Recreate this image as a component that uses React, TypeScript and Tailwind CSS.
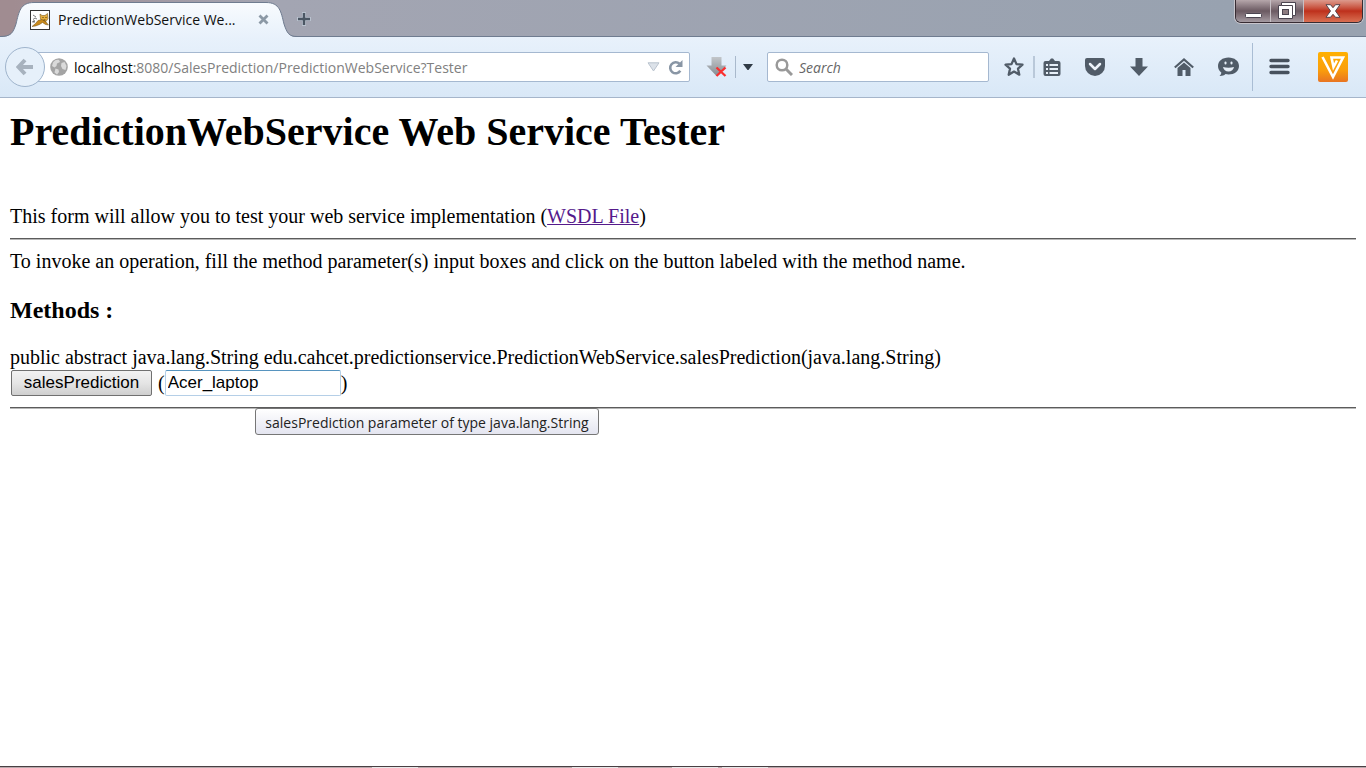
import type { ReactNode } from "react";

function ToolButton({ label, children, className = "" }: { label: string; children: ReactNode; className?: string }) {
  return (
    <button type="button" aria-label={label} className={`flex shrink-0 items-center justify-center ${className}`}>
      {children}
    </button>
  );
}

function CatIcon() {
  return (
    <svg width="20" height="20" viewBox="0 0 20 20" className="shrink-0" aria-hidden="true">
      <rect x="0.5" y="0.5" width="19" height="19" fill="#fff" stroke="#333" />
      <path d="M10 4l2 1.500h3L17.500 3.500l.5 5-2 3h-3.500L10.500 9z" fill="#e8b03c" stroke="#7a5a20" strokeWidth=".6" />
      <path d="M2 16.500l3.500-3 2.500-3 4-1 4 2.500 2.500 3-3-.5-3-2-3 2-4 1.500z" fill="#c98a1c" stroke="#6a4a14" strokeWidth=".5" />
      <path d="M3 5l3 2M3 9.500l2-1.500 2 1M2 12l3-1M4 10v3" fill="none" stroke="#555" strokeWidth=".8" />
      <path d="M12.500 7.500h1M15.500 7.500h1M13.500 10h2" stroke="#3b2b10" strokeWidth=".9" />
    </svg>
  );
}

function TabStrip() {
  return (
    <header className="flex h-[37px] items-start justify-between border-b border-[#6f7c90] bg-linear-to-r from-[#a08c91] from-1% via-[#a3a5b2] via-20% to-[#98a2b0] to-90%">
      <div className="flex h-[37px] items-start">
        <div className="relative h-full w-[297px]">
          <svg width="297" height="37" viewBox="0 0 297 37" className="absolute inset-0" aria-hidden="true">
            <defs>
              <linearGradient id="tab" x1="0" y1="0" x2="0" y2="1">
                <stop offset="0" stopColor="#f8fbfe" />
                <stop offset="1" stopColor="#e8f1fb" />
              </linearGradient>
            </defs>
            <path d="M0 37C11 37 13 33 16 24C19 12 20 2.500 34 2.500H266C280 2.500 281 12 284 24C287 33 289 37 297 37Z" fill="url(#tab)" />
            <path d="M0 36.500C11 36.500 13 33 16 24C19 12 20 2.500 34 2.500H266C280 2.500 281 12 284 24C287 33 289 36.500 297 36.500" fill="none" stroke="#6f7c90" />
          </svg>
          <div className="relative flex h-full items-center pt-0.5 pl-[30px]">
            <CatIcon />
            <span className="ml-2 w-[194px] font-['Open_Sans',sans-serif] text-sm whitespace-nowrap text-[#111]">PredictionWebService We...</span>
            <button type="button" aria-label="Close tab" className="ml-1.5">
              <svg width="11" height="11" viewBox="0 0 11 11" aria-hidden="true">
                <path d="M1.500 1.500l8 8M9.500 1.500l-8 8" stroke="#8c99a6" strokeWidth="2.800" />
              </svg>
            </button>
          </div>
        </div>
        <button type="button" aria-label="New tab" className="mt-3">
          <svg width="14" height="14" viewBox="0 0 14 14" aria-hidden="true">
            <path d="M7 0v14M0 7h14" stroke="#b9c2ce" strokeWidth="4" />
            <path d="M7 1v12M1 7h12" stroke="#4b5663" strokeWidth="2.400" />
          </svg>
        </button>
      </div>
      <div className="mr-[3px] flex h-[23px] overflow-hidden rounded-b-md border border-t-0 border-[#372c33] shadow-[0_0_0_1px_#c8c5cc]">
        <button type="button" aria-label="Minimize" className="flex w-[35px] justify-center border-r border-[#c7c0c5] bg-linear-to-b from-[#b6a7ab] via-[#6b5a62] via-50% to-[#a59ba2] pt-[13px]">
          <svg width="17" height="5" viewBox="0 0 17 5" aria-hidden="true">
            <rect x=".5" y=".5" width="16" height="4" rx="1" fill="#fff" stroke="#4b4550" />
          </svg>
        </button>
        <button type="button" aria-label="Restore" className="flex w-[33px] justify-center border-r border-[#c7c0c5] bg-linear-to-b from-[#b6a7ab] via-[#6b5a62] via-50% to-[#a59ba2] pt-0.5">
          <svg width="18" height="17" viewBox="0 0 18 17" aria-hidden="true">
            <path d="M3.500 .5h14v13h-3v3H.5v-13h3z" fill="#fff" stroke="#4b4550" />
            <path d="M3.500 3.500h11v10" fill="none" stroke="#4b4550" />
            <rect x="4.500" y="7.500" width="6" height="5" fill="#8d7c80" stroke="#4b4550" />
          </svg>
        </button>
        <button type="button" aria-label="Close window" className="flex w-[58px] justify-center bg-linear-to-b from-[#dc9a8d] via-[#be2f1b] via-50% to-[#d96e51] pt-1">
          <svg width="16" height="14" viewBox="0 0 16 14" aria-hidden="true">
            <path d="M1 .7h4.500L8 3.700 10.500.7H15L10.500 7l4.500 6.300h-4.500L8 10.300l-2.500 3H1L5.500 7z" fill="#fff" stroke="#53434a" strokeWidth="1" />
          </svg>
        </button>
      </div>
    </header>
  );
}

function AddressBar() {
  return (
    <div className="flex w-[685px] shrink-0 items-center">
      <button type="button" aria-label="Back" className="z-10 flex size-10 shrink-0 items-center justify-center rounded-full border border-[#9fb4cc] bg-[#e6f0fa]">
        <svg width="18" height="18" viewBox="0 0 18 18" aria-hidden="true">
          <path d="M9 2L2.500 9 9 16M3 9h14" fill="none" stroke="#a7b2be" strokeWidth="4" />
        </svg>
      </button>
      <div className="-ml-2 flex h-[30px] min-w-0 flex-1 items-center rounded-r-xs border border-[#a5b8d0] bg-white pr-1.5 pl-3">
        <svg width="18" height="18" viewBox="0 0 18 18" className="shrink-0" aria-hidden="true">
          <circle cx="9" cy="9" r="8.800" fill="#a4a4a4" />
          <path d="M3 4.500C5 2 7 1.500 9 2l1 2-3 1.500-.5 2.500-2 1.500L2 8zM11.500 5l3-1 2 4-1 4-3-1-1.500-3zM5.500 10.500l3 1 .5 2.500-2 2.500-2.500-2z" fill="#dadada" />
        </svg>
        <div className="relative ml-1.5 flex h-full flex-1 items-center pt-0.5 font-['Open_Sans',sans-serif] text-sm">
          <input aria-label="Address" defaultValue="localhost:8080/SalesPrediction/PredictionWebService?Tester" className="w-full bg-transparent text-[#808080] outline-none" />
          <span aria-hidden="true" className="pointer-events-none absolute left-0 bg-white text-black">localhost</span>
        </div>
        <svg width="13" height="10" viewBox="0 0 13 10" aria-hidden="true">
          <path d="M1 .8h11L6.500 9z" fill="#dce2e9" stroke="#bac3ce" />
        </svg>
        <button type="button" aria-label="Reload" className="ml-2">
          <svg width="15" height="15" viewBox="0 0 15 15" aria-hidden="true">
            <path d="M11.500 3.800A5.500 5.500 0 1 0 12.300 10.800" fill="none" stroke="#8996a5" strokeWidth="2.600" />
            <path d="M14.500 0v7H7.500z" fill="#8996a5" />
          </svg>
        </button>
      </div>
    </div>
  );
}

function Toolbar() {
  return (
    <nav className="flex h-[61px] items-center border-b border-[#a5b5ca] bg-linear-to-b from-[#e8f1fb] to-[#d9e8f7] pr-[18px] pl-[5px]">
      <AddressBar />
      <ToolButton label="Downloads blocked" className="ml-4">
        <svg width="22" height="22" viewBox="0 0 22 22" aria-hidden="true">
          <defs>
            <linearGradient id="arrow" x1="0" y1="0" x2="0" y2="1">
              <stop offset="0" stopColor="#c2c6ca" />
              <stop offset="1" stopColor="#858b91" />
            </linearGradient>
          </defs>
          <path d="M5.500 1h10v8.500h5L10.500 20 .5 9.500h5z" fill="url(#arrow)" />
          <path d="M10.500 11.500l9 8.500M19.500 11.500l-9 8.500" stroke="#fa2e2e" strokeWidth="2.300" />
        </svg>
      </ToolButton>
      <span className="ml-[7px] h-[22px] w-px bg-[#a9b9cc]" />
      <ToolButton label="More downloads" className="ml-[7px]">
        <svg width="10" height="6" viewBox="0 0 10 6" aria-hidden="true"><path d="M0 0h10L5.500 6h-1z" fill="#303b46" /></svg>
      </ToolButton>
      <label className="ml-3.5 flex h-[30px] min-w-0 flex-1 items-center gap-1.5 rounded-xs border border-[#a5b8d0] bg-white pl-[7px]">
        <svg width="18" height="18" viewBox="0 0 18 18" className="shrink-0" aria-hidden="true">
          <circle cx="7" cy="7" r="5.300" fill="none" stroke="#999" strokeWidth="2.500" />
          <path d="M11 11l6 6" stroke="#999" strokeWidth="3" />
        </svg>
        <input aria-label="Search" placeholder="Search" className="w-full min-w-0 bg-transparent pt-0.5 font-['Open_Sans',sans-serif] text-sm italic outline-none placeholder:text-[#666]" />
      </label>
      <ToolButton label="Bookmark" className="ml-3.5 w-[22px]">
        <svg width="22" height="22" viewBox="0 0 22 22" aria-hidden="true">
          <path d="M11 2.500l2.500 5.600 6 .6-4.500 4 1.300 6L11 15.600 5.700 18.700l1.300-6-4.500-4 6-.6z" fill="none" stroke="#515c68" strokeWidth="2.300" strokeLinejoin="round" />
        </svg>
      </ToolButton>
      <span className="ml-2 h-[22px] w-0.5 bg-[#b9c8d9]" />
      <ToolButton label="Bookmarks list" className="ml-2">
        <svg width="18" height="18" viewBox="0 0 18 18" aria-hidden="true">
          <path d="M2.500 3H6l2-2.500h2L12 3h3.500A2 2 0 0 1 17.500 5v11a2 2 0 0 1-2 2h-13a2 2 0 0 1-2-2V5a2 2 0 0 1 2-2z" fill="#515c68" />
          <path d="M3 7h2M3 11h2M3 15h2M6.500 7H15M6.500 11H15M6.500 15H15" stroke="#e7eff8" strokeWidth="2" />
        </svg>
      </ToolButton>
      <ToolButton label="Pocket" className="ml-6">
        <svg width="20" height="18" viewBox="0 0 20 18" aria-hidden="true">
          <path d="M2 0h16a2 2 0 0 1 2 2v6a10 10 0 0 1-20 0V2a2 2 0 0 1 2-2z" fill="#515c68" />
          <path d="M5 6l5 5 5-5" fill="none" stroke="#edf3fa" strokeWidth="2.500" strokeLinecap="round" strokeLinejoin="round" />
        </svg>
      </ToolButton>
      <ToolButton label="Downloads" className="ml-[25px]">
        <svg width="18" height="18" viewBox="0 0 18 18" aria-hidden="true"><path d="M5.500 0h7v8.500H18L9 18 0 8.500h5.500z" fill="#515c68" /></svg>
      </ToolButton>
      <ToolButton label="Home" className="ml-[26px]">
        <svg width="20" height="18" viewBox="0 0 20 18" aria-hidden="true">
          <path d="M.8 9.500L10 1.500l9.200 8" fill="none" stroke="#515c68" strokeWidth="2.200" />
          <path d="M3.500 10L10 4.500l6.500 5.500v8h-5v-6h-3v6h-5z" fill="#515c68" />
        </svg>
      </ToolButton>
      <ToolButton label="Hello chat" className="ml-6">
        <svg width="21" height="20" viewBox="0 0 21 20" aria-hidden="true">
          <path d="M10.500.5C16.500.5 21 4 21 9s-4.500 8.500-10.500 8.500c-1 0-2-.1-3-.4-1.500 1.500-3.500 2-6 1.900 1-.8 1.800-2 1.800-3.500C1.300 14 0 11.700 0 9 0 4 4.500.5 10.500.5z" fill="#515c68" />
          <rect x="6.500" y="4.500" width="2" height="3" rx="1" fill="#e7eff8" />
          <rect x="12.500" y="4.500" width="2" height="3" rx="1" fill="#e7eff8" />
          <path d="M5 10c3.500 1 7.500 1 11 0-.5 2.500-2.500 4.500-5.500 4.500S5.500 12.500 5 10z" fill="#e7eff8" />
        </svg>
      </ToolButton>
      <span className="ml-[13px] h-12 w-px bg-[#a9bdd4]" />
      <ToolButton label="Menu" className="ml-4">
        <svg width="21" height="18" viewBox="0 0 21 18" aria-hidden="true">
          <path d="M2 2.500h17M2 8.500h17M2 14.500h17" stroke="#47515d" strokeWidth="3.400" strokeLinecap="round" />
        </svg>
      </ToolButton>
      <ToolButton label="Video downloader" className="ml-7">
        <svg width="30" height="30" viewBox="0 0 30 30" aria-hidden="true">
          <defs>
            <linearGradient id="orange" x1="0" y1="0" x2="0" y2="1">
              <stop offset="0" stopColor="#ffb000" />
              <stop offset=".6" stopColor="#fa9e0b" />
              <stop offset="1" stopColor="#e87422" />
            </linearGradient>
          </defs>
          <rect width="30" height="30" rx="2" fill="url(#orange)" />
          <path d="M4.500 5l10.500 20L25 5.500H13.500l2 9.500L19 8.500" fill="none" stroke="#fff" strokeWidth="2.600" />
        </svg>
      </ToolButton>
    </nav>
  );
}

function TesterPage() {
  return (
    <main className="flex-1 px-2.5 pt-[11px] font-['Liberation_Serif',serif] text-xl leading-6 text-black">
      <h1 className="text-[40px] leading-[46px] font-bold">PredictionWebService Web Service Tester</h1>
      <p className="mt-[49px]">
        This form will allow you to test your web service implementation (<a href="#wsdl" className="text-[#551a8b] underline decoration-1">WSDL File</a>)
      </p>
      <hr className="mt-2.5 border-t border-b border-t-[#5c5c5c] border-b-[#b8b8b8]" />
      <p className="mt-[9px]">To invoke an operation, fill the method parameter(s) input boxes and click on the button labeled with the method name.</p>
      <h2 className="mt-[23px] text-2xl leading-7 font-bold">Methods :</h2>
      <form onSubmit={(event) => event.preventDefault()} className="mt-[21px]">
        <p>public abstract java.lang.String edu.cahcet.predictionservice.PredictionWebService.salesPrediction(java.lang.String)</p>
        <div className="relative mt-px flex h-[26px] items-center">
          <button type="submit" className="ml-px h-[26px] w-[141px] rounded-xs border border-[#707070] bg-linear-to-b from-[#f2f2f2] via-[#e5e5e5] via-50% to-[#cfcfcf] font-['Liberation_Sans',sans-serif] text-[17px] leading-6">salesPrediction</button>
          <span className="ml-1.5">(</span>
          <input aria-label="salesPrediction parameter" aria-describedby="parameter-tip" defaultValue="Acer_laptop" className="h-[26px] w-44 rounded-xs border border-[#b5cfe7] border-t-[#5794bf] bg-white px-0.5 font-['Liberation_Sans',sans-serif] text-[17px] outline-none" />
          <span>)</span>
          <div id="parameter-tip" role="tooltip" className="absolute top-[38px] left-[245px] z-10 flex h-[27px] w-[344px] items-center justify-center rounded-[3px] border border-[#767676] bg-linear-to-b from-white to-[#e4e5f0] pt-0.5 font-['Open_Sans',sans-serif] text-sm whitespace-nowrap text-[#222]">
            salesPrediction parameter of type java.lang.String
          </div>
        </div>
      </form>
      <hr className="mt-[11px] border-t border-b border-t-[#5c5c5c] border-b-[#b8b8b8]" />
    </main>
  );
}

function TaskbarEdge() {
  return (
    <footer className="flex h-0.5 border-t border-[#493f43] bg-[#b9a9ac]">
      <span className="ml-[372px] h-px w-[46px] bg-[#e8e8e8]" />
      <span className="ml-[154px] h-px w-[46px] bg-[#e8e8e8]" />
      <span className="ml-[54px] h-px w-[46px] bg-[#e8e8e8]" />
      <span className="ml-1 h-px w-[46px] bg-[#e8e8e8]" />
    </footer>
  );
}

export default function App() {
  return (
    <div className="flex min-h-screen flex-col bg-white">
      <TabStrip />
      <Toolbar />
      <TesterPage />
      <TaskbarEdge />
    </div>
  );
}
